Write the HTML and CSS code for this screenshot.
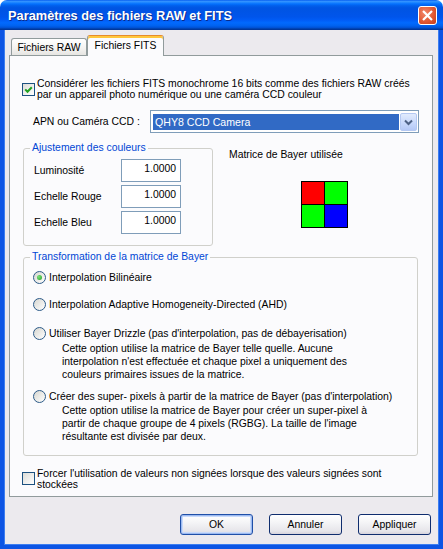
FILE: index.html
```html
<!DOCTYPE html>
<html lang="fr">
<head>
<meta charset="utf-8">
<title>Paramètres des fichiers RAW et FITS</title>
<link rel="stylesheet" href="styles.css">
</head>
<body>
<div class="window">
  <div class="titlebar">
    <span class="title">Paramètres des fichiers RAW et FITS</span>
    <span class="close" aria-label="Fermer"><svg width="11" height="11" viewBox="0 0 11 11"><path d="M1.8 1.8 L9.2 9.2 M9.2 1.8 L1.8 9.2" stroke="#fff" stroke-width="2.2" stroke-linecap="square"/></svg></span>
  </div>
  <div class="client">
    <div class="tabs">
      <div class="tab">Fichiers RAW</div>
      <div class="tab active">Fichiers FITS</div>
    </div>
    <div class="panel">
      <div class="check check-top">
        <span class="box"><svg width="11" height="11" viewBox="0 0 11 11"><polyline points="2.2,5.4 4.5,7.8 8.8,3.2" fill="none" stroke="#21a121" stroke-width="2"/></svg></span>
        <span class="check-text">Considérer les fichiers FITS monochrome 16 bits comme des fichiers RAW créés<br>par un appareil photo numérique ou une caméra CCD couleur</span>
      </div>
      <div class="combo-row">
        <span class="combo-label">APN ou Caméra CCD :</span>
        <div class="combo">
          <span class="combo-value">QHY8 CCD Camera</span>
          <span class="combo-btn"><svg width="9" height="7" viewBox="0 0 9 7"><polyline points="1,1.5 4.5,5 8,1.5" fill="none" stroke="#4d6185" stroke-width="2"/></svg></span>
        </div>
      </div>
      <div class="middle">
        <fieldset class="group group-colors">
          <legend>Ajustement des couleurs</legend>
          <div class="group-inner field-grid">
            <span class="field-label">Luminosité</span><span class="edit">1.0000</span>
            <span class="field-label">Echelle Rouge</span><span class="edit">1.0000</span>
            <span class="field-label">Echelle Bleu</span><span class="edit">1.0000</span>
          </div>
        </fieldset>
        <div class="bayer-col">
          <div class="bayer-label">Matrice de Bayer utilisée</div>
          <div class="bayer">
            <span class="cell red"></span><span class="cell green"></span>
            <span class="cell green"></span><span class="cell blue"></span>
          </div>
        </div>
      </div>
      <fieldset class="group group-bayer">
        <legend>Transformation de la matrice de Bayer</legend>
        <div class="group-inner bayer-inner">
          <div class="opt opt1"><span class="radio on"></span>Interpolation Bilinéaire</div>
          <div class="opt opt2"><span class="radio"></span>Interpolation Adaptive Homogeneity-Directed (AHD)</div>
          <div class="opt opt3"><span class="radio"></span>Utiliser Bayer Drizzle (pas d'interpolation, pas de débayerisation)</div>
          <div class="desc desc1">Cette option utilise la matrice de Bayer telle quelle. Aucune<br>interpolation n'est effectuée et chaque pixel a uniquement des<br>couleurs primaires issues de la matrice.</div>
          <div class="opt opt4"><span class="radio"></span>Créer des super- pixels à partir de la matrice de Bayer (pas d'interpolation)</div>
          <div class="desc desc2">Cette option utilise la matrice de Bayer pour créer un super-pixel à<br>partir de chaque groupe de 4 pixels (RGBG). La taille de l'image<br>résultante est divisée par deux.</div>
        </div>
      </fieldset>
      <div class="check check-bottom">
        <span class="box"></span>
        <span class="check-text">Forcer l'utilisation de valeurs non signées lorsque des valeurs signées sont<br>stockées</span>
      </div>
    </div>
    <div class="buttons">
      <span class="btn default">OK</span>
      <span class="btn">Annuler</span>
      <span class="btn">Appliquer</span>
    </div>
  </div>
</div>
</body>
</html>
```

FILE: styles.css
```css
html, body {
  margin: 0;
  padding: 0;
}
body {
  width: 443px;
  height: 549px;
  overflow: hidden;
  background: #ffffff;
  font-family: "Liberation Sans", Arial, sans-serif;
  font-size: 10.4px;
  color: #000;
}
.window {
  width: 443px;
  height: 549px;
  display: flex;
  flex-direction: column;
}
.titlebar {
  height: 30px;
  flex: none;
  box-sizing: border-box;
  display: flex;
  align-items: center;
  justify-content: space-between;
  padding: 0 6px 0 8px;
  border-radius: 7px 7px 0 0;
  background: linear-gradient(to bottom, #0058ee 0%, #3593ff 4%, #288eff 7%, #127dff 10%, #036ffc 14%, #0262ee 18%, #0057e5 24%, #0054e3 30%, #0055eb 56%, #005bf5 66%, #026afe 76%, #0062ef 86%, #0052d6 92%, #0040ab 96%, #003092 100%);
}
.title {
  color: #fff;
  font-weight: bold;
  font-size: 12.8px;
  text-shadow: 1px 1px 0 #0a2a8a;
  padding-top: 1px;
}
.close {
  width: 19px;
  height: 19px;
  box-sizing: border-box;
  border: 1px solid #fff;
  border-radius: 3px;
  background: radial-gradient(circle at 35% 35%, #f2876a 0%, #e0552f 60%, #c43c1a 100%);
  display: flex;
  align-items: center;
  justify-content: center;
}
.client {
  flex: 1;
  border: 4px solid #0d55e4;
  border-top: 0;
  box-shadow: inset 1px 0 0 #3d7ef0, inset -1px 0 0 #3d7ef0, inset 0 -1px 0 #3d7ef0;
  background: #eceaee;
  padding: 5px 6px 0 5px;
  display: flex;
  flex-direction: column;
}
.tabs {
  display: flex;
  align-items: flex-end;
  height: 20px;
  padding-left: 2px;
}
.tab {
  width: 76px;
  height: 17px;
  box-sizing: border-box;
  border: 1px solid #919b9c;
  border-bottom: 0;
  border-radius: 3px 3px 0 0;
  background: linear-gradient(#ffffff, #f3f2f0 60%, #e6e5e2);
  display: flex;
  align-items: center;
  justify-content: center;
}
.tab.active {
  width: 77px;
  height: 21px;
  margin-bottom: -1px;
  position: relative;
  z-index: 1;
  border-top: 1px solid #e68b2c;
  box-shadow: inset 0 2px 0 #ffc73c;
  background: #fbfbfd;
  padding-bottom: 2px;
}
.panel {
  height: 442px;
  box-sizing: border-box;
  border: 1px solid #919b9c;
  background: #fbfbfd;
  padding: 0 13px 0 12px;
}
.check {
  display: flex;
  align-items: center;
  gap: 2px;
}
.check-top {
  margin-top: 22px;
}
.check-bottom {
  margin-top: 12px;
}
.check-text {
  line-height: 11px;
}
.box {
  flex: none;
  width: 13px;
  height: 13px;
  box-sizing: border-box;
  border: 1px solid #1c5180;
  background: linear-gradient(135deg, #dcdcd7, #ffffff);
  display: flex;
  align-items: center;
  justify-content: center;
}
.combo-row {
  display: flex;
  align-items: center;
  margin-top: 10px;
  padding-left: 11px;
}
.combo-label {
  flex: 0 0 117px;
}
.combo {
  width: 269px;
  height: 23px;
  box-sizing: border-box;
  border: 1px solid #7f9db9;
  background: #fff;
  padding: 2px 1px 1px 2px;
  display: flex;
}
.combo-value {
  flex: 1;
  margin: 1px 1px 1px 0;
  background: #316ac5;
  color: #fff;
  padding-left: 2px;
  display: flex;
  align-items: center;
  font-size: 10.6px;
}
.combo-btn {
  width: 17px;
  box-sizing: border-box;
  border: 1px solid #b4c8f2;
  border-radius: 2px;
  background: linear-gradient(#e1ebfd, #c6d7fb 60%, #b4c8f6);
  display: flex;
  align-items: center;
  justify-content: center;
}
.middle {
  display: flex;
  align-items: flex-start;
  margin-top: 9px;
}
.group {
  margin: 0 1px;
  padding: 0;
  border: 1px solid #d0d0cb;
  border-radius: 3px;
  min-width: 0;
}
.group legend {
  margin-left: 6px;
  padding: 0 2px;
  color: #0046d5;
  line-height: 12px;
}
.group-colors {
  width: 190px;
  box-sizing: border-box;
  flex: none;
}
.field-grid {
  display: grid;
  grid-template-columns: 87px 60px;
  grid-auto-rows: 23px;
  row-gap: 3px;
  align-items: center;
  padding: 5px 0 11px 10px;
}
.edit {
  height: 23px;
  box-sizing: border-box;
  border: 1px solid #7f9db9;
  background: #fff;
  text-align: right;
  padding: 3px 4px 0 0;
  line-height: 12px;
}
.bayer-col {
  margin-left: 15px;
}
.bayer-label {
  margin-top: 7px;
  line-height: 12px;
}
.bayer {
  margin: 20px 0 0 72px;
  display: grid;
  grid-template-columns: 22px 22px;
  grid-template-rows: 22px 22px;
  gap: 1px;
  padding: 1px;
  background: #000;
  width: fit-content;
}
.cell.red { background: #ff0000; }
.cell.green { background: #00ff00; }
.cell.blue { background: #0000ff; }
.group-bayer {
  margin-top: 5px;
}
.bayer-inner {
  padding: 8px 0 11px 9px;
}
.opt {
  display: flex;
  align-items: center;
  gap: 3px;
  height: 13px;
  line-height: 13px;
}
.opt2 { margin-top: 14px; }
.opt3 { margin-top: 16px; }
.opt4 { margin-top: 9px; }
.radio {
  flex: none;
  width: 13px;
  height: 13px;
  box-sizing: border-box;
  border: 1px solid #2c5a88;
  border-radius: 50%;
  background: linear-gradient(135deg, #d6d6d0, #ffffff);
  display: flex;
  align-items: center;
  justify-content: center;
}
.radio.on::after {
  content: "";
  width: 5px;
  height: 5px;
  border-radius: 50%;
  background: radial-gradient(circle at 35% 35%, #7be07b, #21a121);
}
.desc {
  margin-left: 29px;
  line-height: 12.8px;
}
.desc1 { margin-top: 3px; }
.desc2 { margin-top: 2px; }
.buttons {
  display: flex;
  justify-content: flex-end;
  margin-top: 17px;
  padding-right: 2px;
}
.btn {
  width: 73px;
  height: 21px;
  box-sizing: border-box;
  border: 1px solid #0f2d6e;
  border-radius: 3px;
  background: linear-gradient(#ffffff, #f4f4f6 40%, #e6e5ea 85%, #d6d3dc);
  display: flex;
  align-items: center;
  justify-content: center;
}
.btn + .btn {
  margin-left: 16px;
}
.btn.default {
  border-color: #1f4fa8;
  box-shadow: inset 0 0 0 1px #9cbaf0, inset 0 0 0 2px #c9dafa;
}
```
